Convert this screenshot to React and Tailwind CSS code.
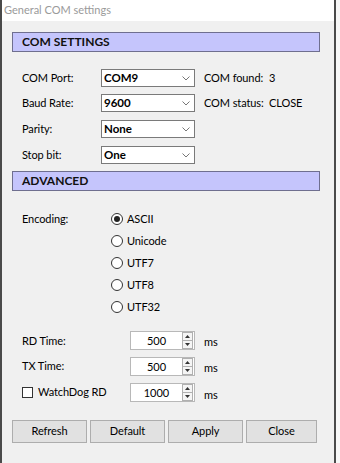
import React from "react";

const font = { fontFamily: 'Lato, "Noto Sans", sans-serif' };
const txt = "text-[11px] tracking-[-0.1px] text-black";

function Select({ value }) {
  return (
    <div className="w-[94px] h-[18px] bg-white border border-[#7a7a7a] flex items-center justify-between pl-[2px] pr-[4px]">
      <span className="text-[11.5px] font-bold text-black leading-none">{value}</span>
      <svg width="8" height="5" viewBox="0 0 8 5" className="block">
        <path d="M0.5 0.5 L4 4 L7.5 0.5" fill="none" stroke="#777" strokeWidth="1" />
      </svg>
    </div>
  );
}

function Spin({ value }) {
  return (
    <div className="w-[65px] h-[19px] bg-white border border-[#b8b8b8] flex items-center">
      <div className="flex-1 text-center text-[11px] text-black leading-none">{value}</div>
      <div className="w-[11px] h-[17px] flex flex-col mr-[1px]">
        <div className="flex-1 border border-[#b0b0b0] bg-[#f5f5f5] flex items-center justify-center">
          <svg width="5" height="3" viewBox="0 0 5 3"><path d="M0 3 L2.5 0 L5 3 Z" fill="#333" /></svg>
        </div>
        <div className="flex-1 border border-t-0 border-[#b0b0b0] bg-[#f5f5f5] flex items-center justify-center">
          <svg width="5" height="3" viewBox="0 0 5 3"><path d="M0 0 L2.5 3 L5 0 Z" fill="#333" /></svg>
        </div>
      </div>
    </div>
  );
}

function Radio({ label, checked }) {
  return (
    <div className="h-[22px] flex items-center">
      <div className="w-[12px] h-[12px] rounded-full border border-[#333] bg-white flex items-center justify-center">
        {checked && <div className="w-[6px] h-[6px] rounded-full bg-[#222]" />}
      </div>
      <span className={`ml-[4px] ${txt}`}>{label}</span>
    </div>
  );
}

function Header({ children }) {
  return (
    <div className="w-[308px] h-[20px] bg-[#c5c5fc] border border-[#6f6f8f] flex items-center pl-[9px]">
      <span className="text-[12px] font-bold text-[#111]">{children}</span>
    </div>
  );
}

function Button({ children, w }) {
  return (
    <div className={`h-[23px] ${w} bg-[#e1e1e1] border border-[#adadad] flex items-center justify-center ${txt}`}>
      {children}
    </div>
  );
}

export default function App() {
  return (
    <div className="w-[340px] h-[463px] bg-[#f7f7f7]" style={font}>
      <div className="w-[336px] h-[463px] border-l-2 border-r-2 border-[#4a4a4a] bg-[#f0f0f0] flex flex-col">
        <div className="h-[21px] bg-white flex items-center pl-[2px]">
          <span className="text-[11px] text-[#9a9a9a]">General COM settings</span>
        </div>
        <div className="pl-[10px] pt-[11px] flex flex-col">
          <Header>COM SETTINGS</Header>
          <div className="pl-[10px] flex flex-col">
            <div className="flex items-center mt-[17px]">
              <span className={`w-[79px] shrink-0 ${txt}`}>COM Port:</span>
              <Select value="COM9" />
              <span className={`ml-[9px] w-[65px] shrink-0 whitespace-nowrap ${txt}`}>COM found:</span>
              <span className={txt}>3</span>
            </div>
            <div className="flex items-center mt-[7px]">
              <span className={`w-[79px] shrink-0 ${txt}`}>Baud Rate:</span>
              <Select value="9600" />
              <span className={`ml-[9px] w-[65px] shrink-0 whitespace-nowrap ${txt}`}>COM status:</span>
              <span className={txt}>CLOSE</span>
            </div>
            <div className="flex items-center mt-[8px]">
              <span className={`w-[79px] shrink-0 ${txt}`}>Parity:</span>
              <Select value="None" />
            </div>
            <div className="flex items-center mt-[8px]">
              <span className={`w-[79px] shrink-0 ${txt}`}>Stop bit:</span>
              <Select value="One" />
            </div>
          </div>
          <div className="mt-[7px]">
            <Header>ADVANCED</Header>
          </div>
          <div className="pl-[10px] flex mt-[17px]">
            <div className={`w-[89px] h-[22px] flex items-center ${txt}`}>Encoding:</div>
            <div className="flex flex-col">
              <Radio label="ASCII" checked />
              <Radio label="Unicode" />
              <Radio label="UTF7" />
              <Radio label="UTF8" />
              <Radio label="UTF32" />
            </div>
          </div>
          <div className="pl-[10px] flex flex-col mt-[13px]">
            <div className="flex items-center">
              <span className={`w-[108px] ${txt}`}>RD Time:</span>
              <Spin value="500" />
              <span className={`ml-[9px] mt-[3px] ${txt}`}>ms</span>
            </div>
            <div className="flex items-center mt-[6px]">
              <span className={`w-[108px] ${txt}`}>TX Time:</span>
              <Spin value="500" />
              <span className={`ml-[9px] mt-[3px] ${txt}`}>ms</span>
            </div>
            <div className="flex items-center mt-[5px]">
              <div className="w-[108px] flex items-center">
                <div className="w-[11px] h-[11px] border border-[#333] bg-white" />
                <span className={`ml-[5px] ${txt}`}>WatchDog RD</span>
              </div>
              <Spin value="1000" />
              <span className={`ml-[9px] mt-[6px] ${txt}`}>ms</span>
            </div>
          </div>
          <div className="flex mt-[16px] gap-[3px]">
            <Button w="w-[75px]">Refresh</Button>
            <Button w="w-[75px]">Default</Button>
            <Button w="w-[75px]">Apply</Button>
            <Button w="w-[71px]">Close</Button>
          </div>
        </div>
      </div>
    </div>
  );
}
